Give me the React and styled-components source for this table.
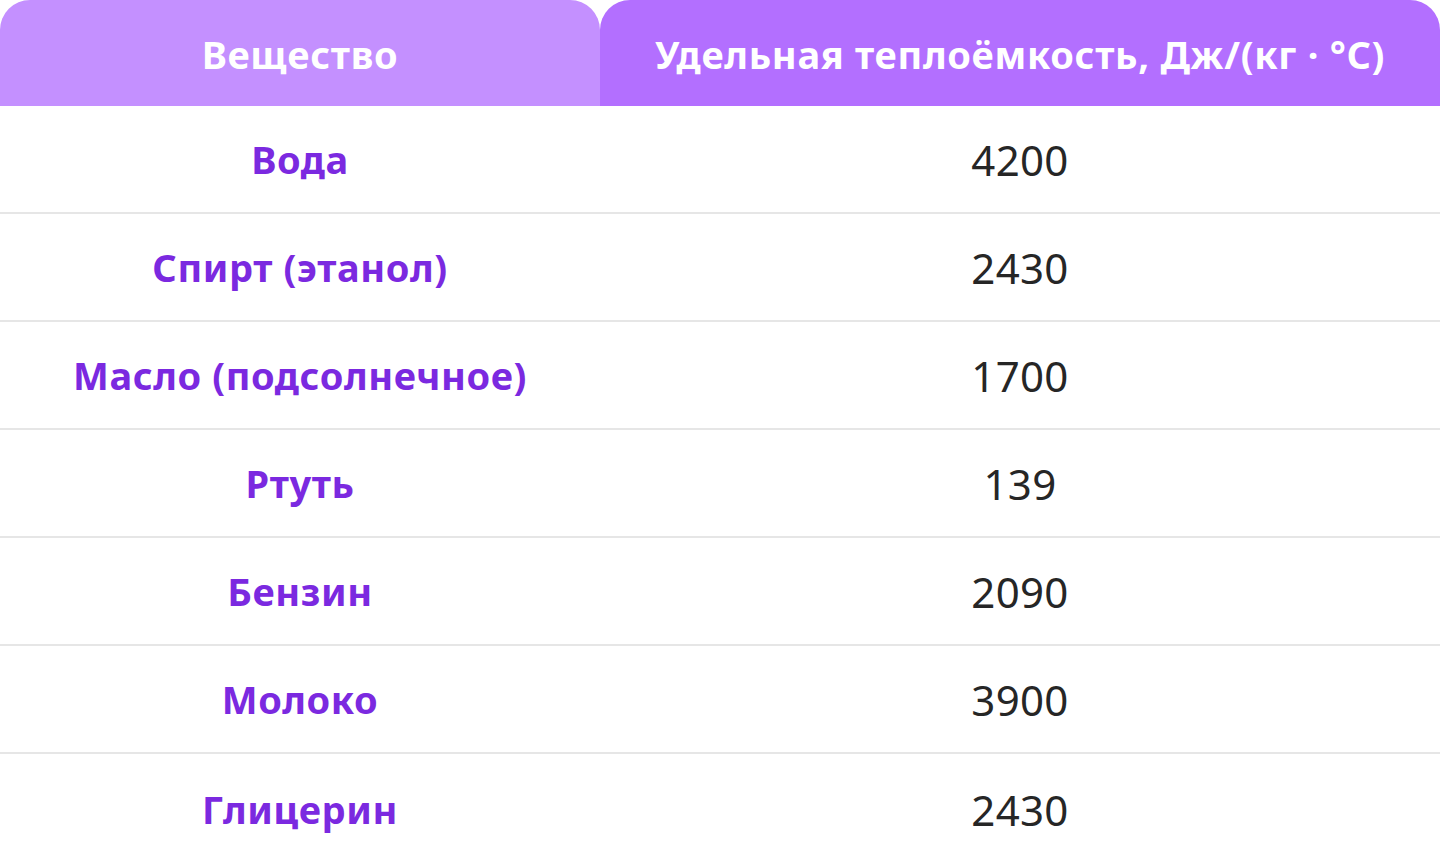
import React from "react";
import styled, { createGlobalStyle } from "styled-components";

const Global = createGlobalStyle`
  html, body { margin: 0; padding: 0; background: #ffffff; }
  body { font-family: "Noto Sans", "Open Sans", sans-serif; }
`;

const Table = styled.div`
  width: 1440px;
  display: grid;
  grid-template-columns: 600px 840px;
`;

const HeadCell = styled.div`
  height: 106px;
  display: flex;
  align-items: center;
  justify-content: center;
  background: ${(p) => p.$bg};
  border-radius: 30px 30px 0 0;
  color: #ffffff;
  font-weight: 700;
  font-size: 38px;
  letter-spacing: 0.7px;
  padding-top: 2px;
  box-sizing: border-box;
`;

const Cell = styled.div`
  height: 108px;
  box-sizing: border-box;
  display: flex;
  align-items: center;
  justify-content: center;
  border-bottom: ${(p) => (p.$last ? "none" : "2px solid #e6e6e6")};
  font-size: ${(p) => (p.$name ? "38px" : "42px")};
  letter-spacing: ${(p) => (p.$name ? "0.6px" : "0.3px")};
  color: ${(p) => (p.$name ? "#7b29e0" : "#262626")};
  font-weight: ${(p) => (p.$name ? 700 : 400)};
  padding-top: ${(p) => (p.$last ? "2px" : "0")};
`;

const rows = [
  ["Вода", "4200"],
  ["Спирт (этанол)", "2430"],
  ["Масло (подсолнечное)", "1700"],
  ["Ртуть", "139"],
  ["Бензин", "2090"],
  ["Молоко", "3900"],
  ["Глицерин", "2430"],
];

export default function App() {
  return (
    <>
      <Global />
      <Table>
        <HeadCell $bg="#c490ff">Вещество</HeadCell>
        <HeadCell $bg="#b36fff">Удельная теплоёмкость, Дж/(кг · °C)</HeadCell>
        {rows.map(([n, v], i) => (
          <React.Fragment key={i}>
            <Cell $name $last={i === rows.length - 1}>{n}</Cell>
            <Cell $last={i === rows.length - 1}>{v}</Cell>
          </React.Fragment>
        ))}
      </Table>
    </>
  );
}
